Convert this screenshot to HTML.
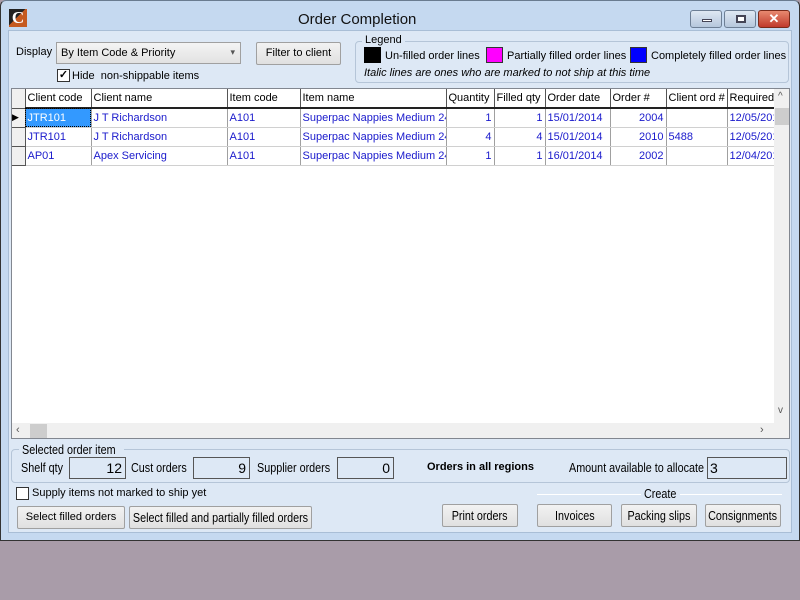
<!DOCTYPE html>
<html><head><style>
*{box-sizing:border-box;margin:0;padding:0}
body{width:800px;height:600px;background:#a99ca9;position:relative;overflow:hidden;font-family:"Liberation Sans",Arial,sans-serif;font-size:12px;color:#000}
.abs{position:absolute}
#win{left:0;top:0;width:800px;height:541px;background:#c5d9f0;border:1px solid #333;border-top-color:#6a7c90;border-radius:6px 6px 0 0}
#client{left:8px;top:30px;width:784px;height:503px;background:#dde8f5;border:1px solid #a9bed6}
.btn{position:absolute;background:linear-gradient(#f2f2f2,#e0e0e0);border:1px solid #a0a0a0;border-radius:2px;text-align:center;font-size:12px;white-space:nowrap}
.n{display:inline-block;font-size:13px;transform:scaleX(.83);transform-origin:left center;white-space:nowrap}
.btn .n{transform-origin:center center;margin:0 -20px}
.grid{left:11px;top:88px;width:779px;height:351px;background:#fff;border:1px solid #828790;overflow:hidden}
table{border-collapse:collapse;position:absolute;left:0;top:0;table-layout:fixed;width:763px}
td,th{height:19px;border-right:1px solid #a0a0a0;border-bottom:1px solid #d0d0d0;padding:0 2px;white-space:nowrap;overflow:hidden;font-weight:normal;text-align:left}
th{background:#fff;border-bottom:2px solid #222;border-right:1px solid #555;height:19px}
td{color:#1a1acc}
.r{text-align:right}
.ind{background:#f0f0f0;border-right:1px solid #555;border-bottom:1px solid #555;padding:0}
.box{position:absolute;border:1px solid #555;background:#dde8f5;text-align:right;padding-right:3px;font-size:14px;height:22px;line-height:20px}
.lbl{position:absolute;white-space:nowrap}
</style></head><body>
<div id="win" class="abs"></div>
<div class="abs" style="left:9px;top:9px;width:18px;height:18px;background:linear-gradient(135deg,#222 45%,#c55a20 46%);color:#fff;font:bold 17px 'Liberation Serif',serif;line-height:18px;text-align:center">C</div>
<div class="abs" style="left:298px;top:11px;font-size:15px;color:#111">Order Completion</div>
<div class="abs" style="left:690px;top:10px;width:32px;height:18px;border:1px solid #6d7f95;border-radius:3px;background:linear-gradient(#dfe8f3,#b5c7dc)"><div class="abs" style="left:11px;top:8px;width:10px;height:3px;background:#fff;border:1px solid #445"></div></div>
<div class="abs" style="left:724px;top:10px;width:32px;height:18px;border:1px solid #6d7f95;border-radius:3px;background:linear-gradient(#dfe8f3,#b5c7dc)"><div class="abs" style="left:11px;top:4px;width:10px;height:8px;background:#fff;border:2px solid #445"></div></div>
<div class="abs" style="left:758px;top:10px;width:32px;height:18px;border:1px solid #7a2a1a;border-radius:3px;background:linear-gradient(#e88a70,#c0392b);color:#fff;font:bold 13px sans-serif;text-align:center;line-height:16px">✕</div>
<div id="client" class="abs"></div>

<div class="lbl" style="left:16px;top:46px;font-size:11px">Display</div>
<div class="abs" style="left:56px;top:42px;width:185px;height:22px;border:1px solid #a0a0a0;background:linear-gradient(#f4f4f4,#e2e2e2);padding:4px 4px;font-size:11px">By Item Code &amp; Priority<span class="abs" style="right:5px;top:4px;font-size:9px;color:#555">▾</span></div>
<div class="abs" style="left:57px;top:69px;width:13px;height:13px;border:1px solid #333;background:#fff;font-size:11px;line-height:11px;text-align:center;font-weight:bold">✓</div>
<div class="lbl" style="left:72px;top:70px;font-size:11px">Hide&nbsp; non-shippable items</div>
<div class="btn" style="left:256px;top:42px;width:85px;height:23px;line-height:21px;font-size:11px">Filter to client</div>

<div class="abs" style="left:355px;top:41px;width:434px;height:42px;border:1px solid #b5c5d8;border-radius:4px"></div>
<div class="abs" style="left:362px;top:34px;background:#dde8f5;padding:0 3px;font-size:11px">Legend</div>
<div class="abs" style="left:364px;top:47px;width:17px;height:16px;background:#000"></div>
<div class="lbl" style="left:385px;top:50px;font-size:11px">Un-filled order lines</div>
<div class="abs" style="left:486px;top:47px;width:17px;height:16px;background:#f0f;border:1px solid #333"></div>
<div class="lbl" style="left:507px;top:50px;font-size:11px">Partially filled order lines</div>
<div class="abs" style="left:630px;top:47px;width:17px;height:16px;background:#00f;border:1px solid #333"></div>
<div class="lbl" style="left:651px;top:50px;font-size:11px">Completely filled order lines</div>
<div class="lbl" style="left:364px;top:67px;font-size:11px;font-style:italic">Italic lines are ones who are marked to not ship at this time</div>

<div class="abs grid">
<table style="font-size:11px">
<colgroup><col style="width:13px"><col style="width:66px"><col style="width:136px"><col style="width:73px"><col style="width:146px"><col style="width:48px"><col style="width:51px"><col style="width:65px"><col style="width:56px"><col style="width:61px"><col style="width:48px"></colgroup>
<tr><th class="ind"></th><th>Client code</th><th>Client name</th><th>Item code</th><th>Item name</th><th>Quantity</th><th>Filled qty</th><th>Order date</th><th>Order #</th><th>Client ord #</th><th>Required</th></tr>
<tr><td class="ind" style="color:#000;font-size:9px">▶</td><td style="background:#3399ff;color:#fff;outline:1px dotted #000;outline-offset:-1px">JTR101</td><td>J T Richardson</td><td>A101</td><td>Superpac Nappies Medium 24</td><td class="r">1</td><td class="r">1</td><td>15/01/2014</td><td class="r">2004</td><td></td><td>12/05/2014</td></tr>
<tr><td class="ind"></td><td>JTR101</td><td>J T Richardson</td><td>A101</td><td>Superpac Nappies Medium 24</td><td class="r">4</td><td class="r">4</td><td>15/01/2014</td><td class="r">2010</td><td>5488</td><td>12/05/2014</td></tr>
<tr><td class="ind"></td><td>AP01</td><td>Apex Servicing</td><td>A101</td><td>Superpac Nappies Medium 24</td><td class="r">1</td><td class="r">1</td><td>16/01/2014</td><td class="r">2002</td><td></td><td>12/04/2014</td></tr>
</table>
<div class="abs" style="left:762px;top:0;width:16px;height:334px;background:#f0f0f0"><div class="abs" style="left:1px;top:19px;width:14px;height:17px;background:#cdcdcd"></div><div class="abs" style="left:4px;top:2px;font-size:10px;color:#555">^</div><div class="abs" style="left:4px;top:316px;font-size:10px;color:#555">v</div></div>
<div class="abs" style="left:0;top:334px;width:778px;height:16px;background:#f0f0f0"><div class="abs" style="left:18px;top:1px;width:17px;height:14px;background:#cdcdcd"></div><div class="abs" style="left:4px;top:1px;font-size:11px;color:#555">‹</div><div class="abs" style="left:748px;top:1px;font-size:11px;color:#555">›</div></div>
</div>

<div class="abs" style="left:11px;top:449px;width:779px;height:34px;border:1px solid #b5c5d8;border-radius:4px"></div>
<div class="lbl" style="left:19px;top:442px;background:#dde8f5;padding:0 3px;width:105px"><span class="n">Selected order item</span></div>
<div class="lbl" style="left:21px;top:460px"><span class="n">Shelf qty</span></div>
<div class="box" style="left:69px;top:457px;width:57px">12</div>
<div class="lbl" style="left:131px;top:460px"><span class="n">Cust orders</span></div>
<div class="box" style="left:193px;top:457px;width:57px">9</div>
<div class="lbl" style="left:257px;top:460px"><span class="n">Supplier orders</span></div>
<div class="box" style="left:337px;top:457px;width:57px">0</div>
<div class="lbl" style="left:427px;top:461px;font-weight:bold;font-size:11px">Orders in all regions</div>
<div class="lbl" style="left:569px;top:460px"><span class="n">Amount available to allocate</span></div>
<div class="box" style="left:707px;top:457px;width:80px;text-align:left;padding-left:2px">3</div>

<div class="abs" style="left:16px;top:487px;width:13px;height:13px;border:1px solid #333;background:#fff"></div>
<div class="lbl" style="left:32px;top:487px;font-size:11px">Supply items not marked to ship yet</div>
<div class="btn" style="left:17px;top:506px;width:108px;height:23px;line-height:21px;font-size:11px">Select filled orders</div>
<div class="btn" style="left:129px;top:506px;width:183px;height:23px;line-height:21px"><span class="n">Select filled and partially filled orders</span></div>
<div class="btn" style="left:442px;top:504px;width:76px;height:23px;line-height:21px"><span class="n">Print orders</span></div>
<div class="abs" style="left:537px;top:494px;width:104px;height:1px;background:#999;border-bottom:1px solid #fff"></div>
<div class="lbl" style="left:644px;top:486px"><span class="n">Create</span></div>
<div class="abs" style="left:680px;top:494px;width:102px;height:1px;background:#999;border-bottom:1px solid #fff"></div>
<div class="btn" style="left:537px;top:504px;width:75px;height:23px;line-height:21px"><span class="n">Invoices</span></div>
<div class="btn" style="left:621px;top:504px;width:76px;height:23px;line-height:21px"><span class="n">Packing slips</span></div>
<div class="btn" style="left:705px;top:504px;width:76px;height:23px;line-height:21px"><span class="n">Consignments</span></div>
</body></html>
